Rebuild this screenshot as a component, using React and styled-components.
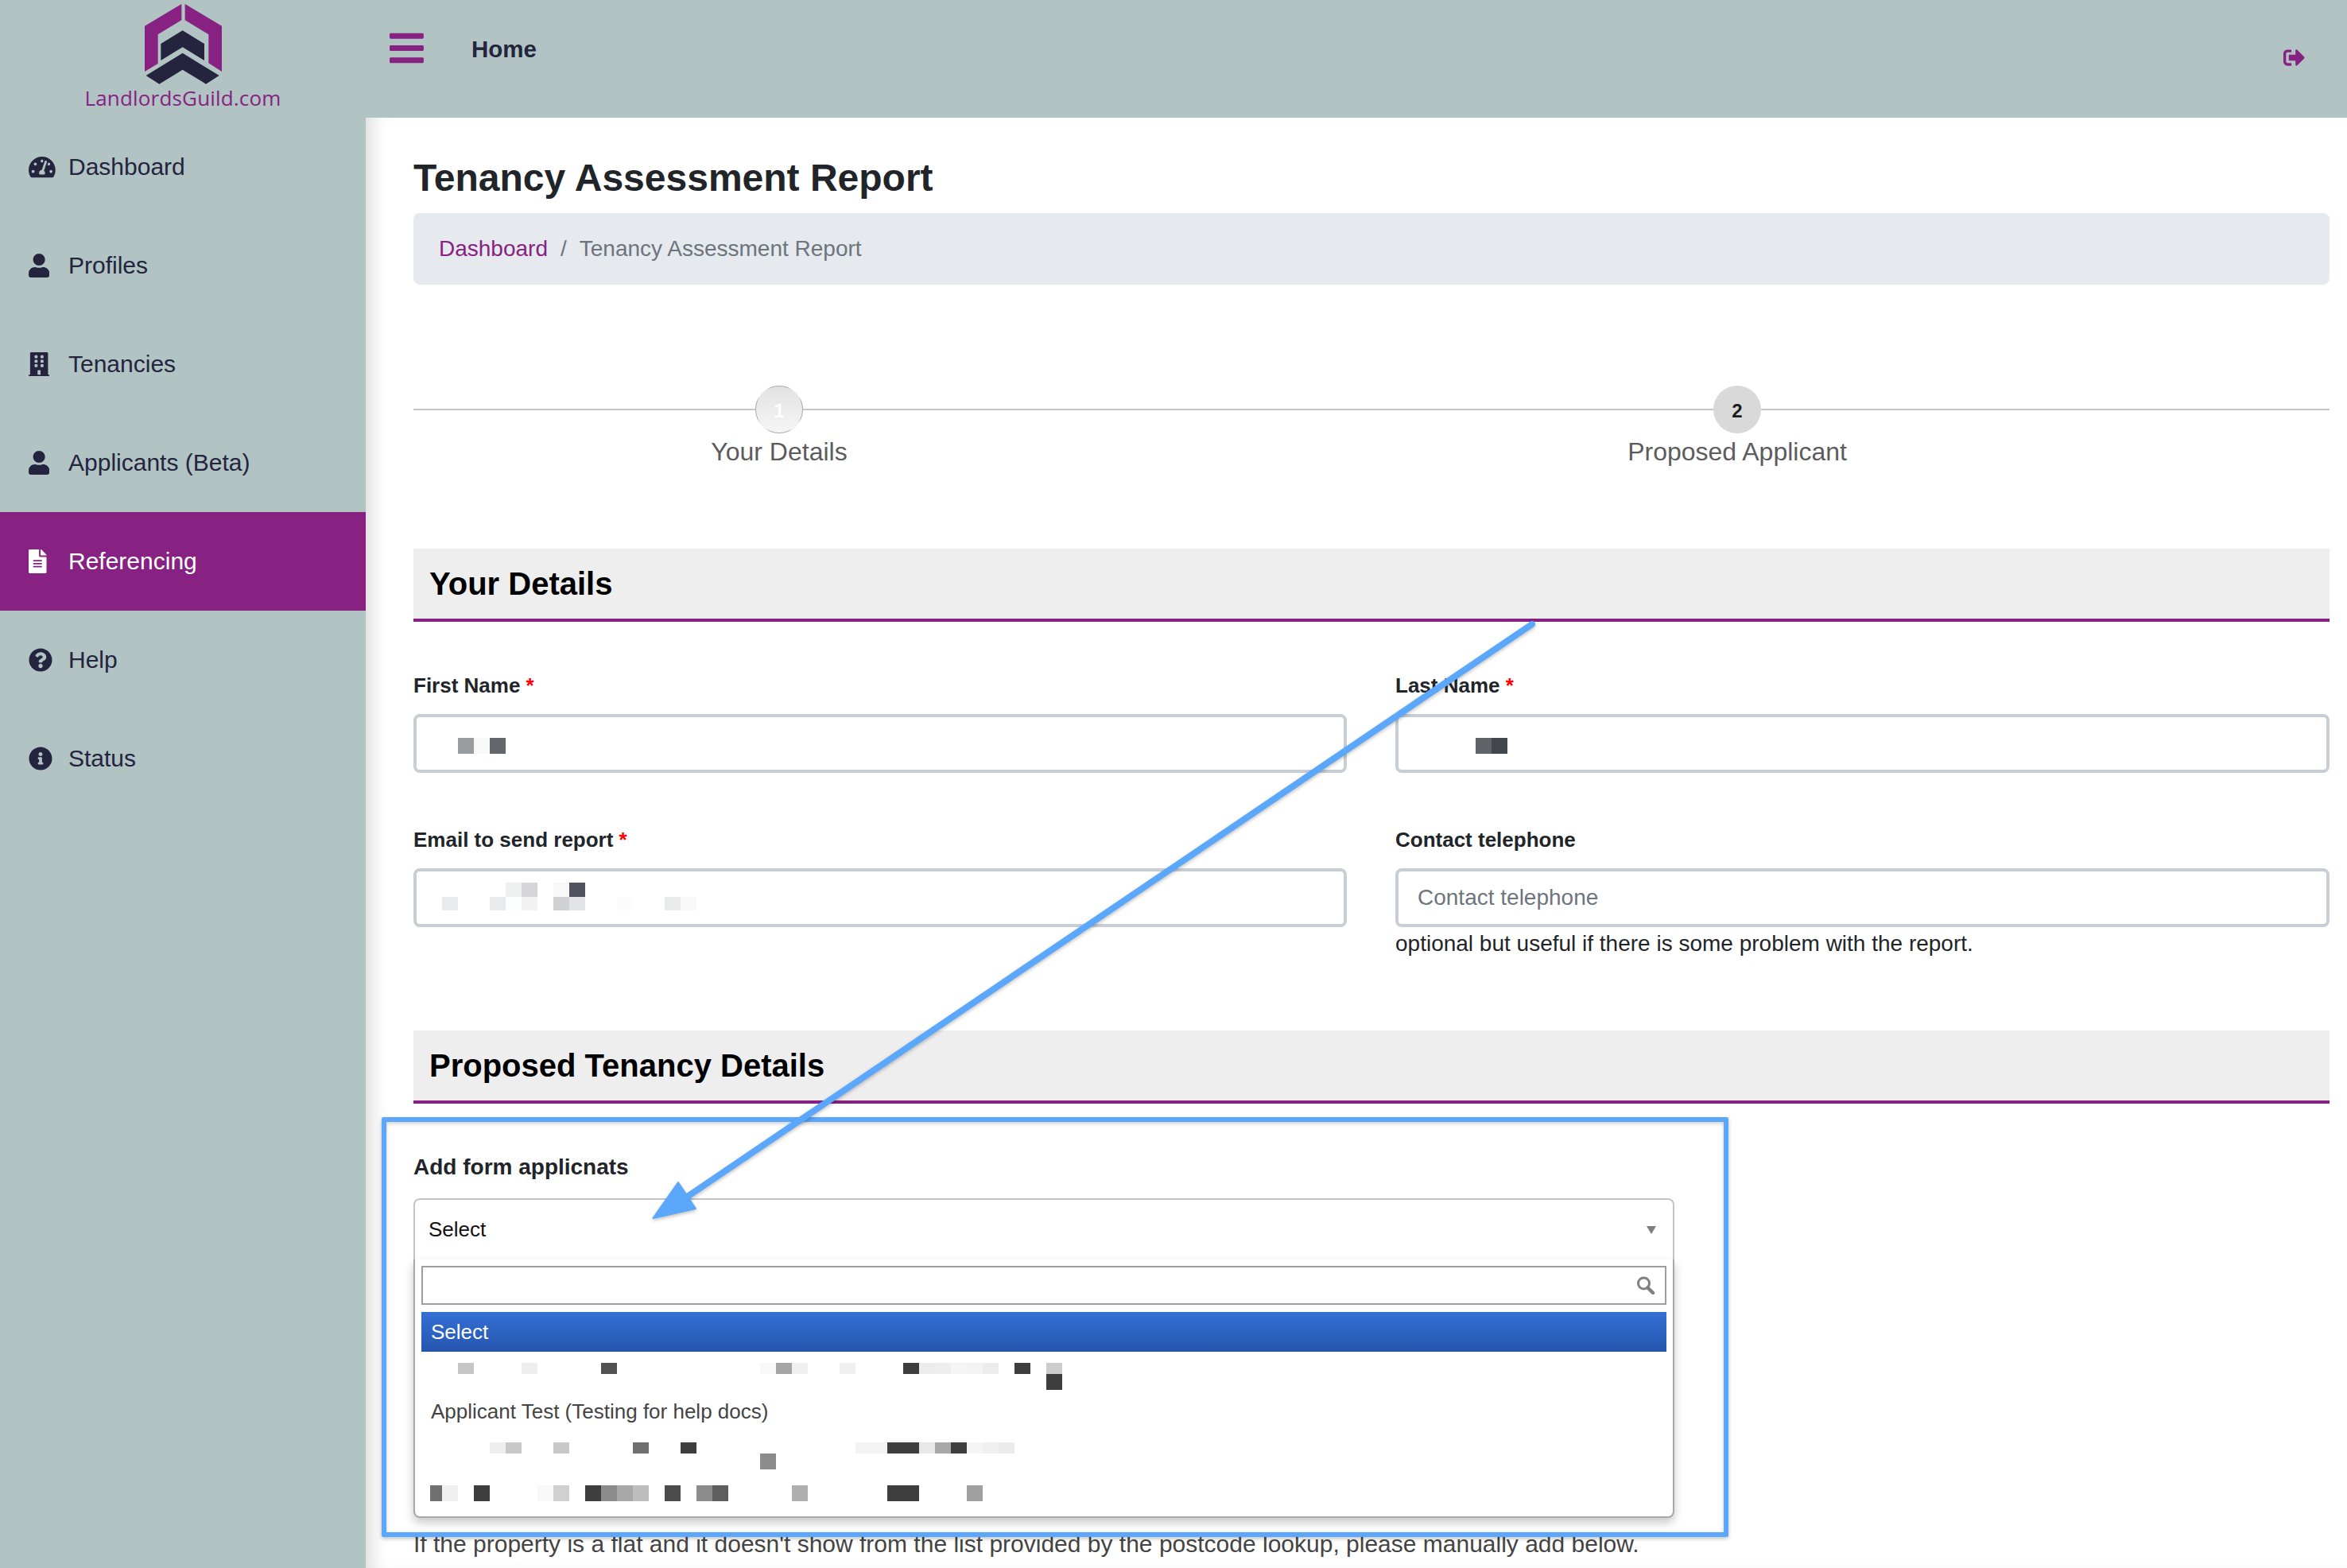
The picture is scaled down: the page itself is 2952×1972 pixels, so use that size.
import styled, { createGlobalStyle } from 'styled-components'
import {
  FaBars,
  FaBuilding,
  FaFileAlt,
  FaInfoCircle,
  FaQuestionCircle,
  FaSignOutAlt,
  FaTachometerAlt,
  FaUser,
} from 'react-icons/fa'

const purple = '#872282'
const navy = '#24243f'
const sage = '#b1c3c3'
const blue = '#5aa7fb'

const GlobalStyle = createGlobalStyle`
  html, body {
    margin: 0;
    padding: 0;
    background: #fff;
  }
  body {
    font-family: 'Liberation Sans', Arial, sans-serif;
    font-size: 28px;
    color: #212529;
  }
  * {
    box-sizing: border-box;
  }
`

const Page = styled.div`
  position: relative;
  width: 2952px;
  height: 1972px;
  overflow: hidden;
  display: grid;
  grid-template-columns: 460px 1fr;
`

const Sidebar = styled.aside`
  background: ${sage};
  display: flex;
  flex-direction: column;
`

const Brand = styled.div`
  height: 148px;
  padding-top: 5px;
  display: flex;
  flex-direction: column;
  align-items: center;
`

const BrandName = styled.div`
  font-family: 'Open Sans', sans-serif;
  font-size: 26px;
  line-height: 30px;
  margin-top: 2px;
  letter-spacing: 0.18px;
  color: ${purple};
`

const NavList = styled.nav`
  display: flex;
  flex-direction: column;
`

const NavItem = styled.a`
  height: 124px;
  padding-left: 36px;
  display: flex;
  align-items: center;
  font-size: 30px;
  color: ${(p) => (p.$active ? '#fff' : navy)};
  background: ${(p) => (p.$active ? purple : 'transparent')};
`

const NavIcon = styled.span`
  width: 50px;
  display: flex;
  font-size: 30px;
  svg {
    width: ${(p) => p.$ratio}em;
    flex-shrink: 0;
  }
`

const Content = styled.div`
  display: flex;
  flex-direction: column;
  min-width: 0;
`

const Topbar = styled.header`
  height: 148px;
  flex-shrink: 0;
  background: ${sage};
  padding: 0 53px 27px 30px;
  display: flex;
  align-items: center;
`

const MenuButton = styled.span`
  display: flex;
  color: ${purple};
  font-size: 49px;
  svg {
    width: 0.875em;
  }
`

const TopTitle = styled.div`
  margin-left: 60px;
  font-size: 29.5px;
  font-weight: bold;
  color: ${navy};
  margin-top: 3px;
`

const LogoutButton = styled.span`
  margin-left: auto;
  margin-top: 24px;
  display: flex;
  color: ${purple};
  font-size: 27px;
`

const Main = styled.main`
  flex: 1;
  background: #fff;
  padding: 47px 22px 0 60px;
  box-shadow: inset 22px 0 22px -14px rgba(0, 0, 0, 0.14);
`

const PageTitle = styled.h1`
  margin: 0 0 15px;
  font-size: 48px;
  line-height: 58px;
  font-weight: bold;
  color: #212529;
`

const Breadcrumb = styled.div`
  height: 90px;
  padding: 0 32px;
  background: #e6e9ed;
  border-radius: 8px;
  display: flex;
  align-items: center;
  color: #6c757d;
`

const Crumb = styled.a`
  color: ${purple};
`

const CrumbDivider = styled.span`
  margin: 0 16px;
`

const Stepper = styled.div`
  margin-top: 127px;
  display: grid;
  grid-template-columns: 920px 1fr;
`

const Step = styled.div`
  display: flex;
  flex-direction: column;
  align-items: center;
`

const StepTrack = styled.div`
  width: 100%;
  display: flex;
  align-items: center;
  &::before,
  &::after {
    content: '';
    flex: 1;
    height: 2px;
    background: #c6c6c6;
  }
`

const StepCircle = styled.div`
  width: 60px;
  height: 60px;
  border-radius: 50%;
  display: flex;
  align-items: center;
  justify-content: center;
  font-size: 24px;
  font-weight: bold;
  padding-top: 3px;
  ${(p) =>
    p.$done
      ? `
    color: #fff;
    border: 1.5px solid transparent;
    background:
      linear-gradient(#e2e2e2, #f6f6f6) padding-box,
      conic-gradient(#aaa 0 20deg, #eee 34deg 56deg, #aaa 70deg 110deg, #eee 124deg 146deg, #aaa 160deg 200deg, #eee 214deg 236deg, #aaa 250deg 290deg, #eee 304deg 326deg, #aaa 340deg) border-box;
  `
      : `
    color: #1c1c1c;
    background: #d9d9d9;
  `}
`

const StepLabel = styled.div`
  font-size: 32px;
  line-height: 38px;
  margin-top: 4px;
  color: #5c5c5c;
`

const SectionHeader = styled.h2`
  margin: ${(p) => p.$top}px 0 0;
  height: 92px;
  padding-left: 20px;
  display: flex;
  align-items: center;
  background: #eee;
  border-bottom: 4px solid ${purple};
  font-size: 40px;
  font-weight: bold;
  color: #000;
`

const FormGrid = styled.div`
  margin-top: 61px;
  display: grid;
  grid-template-columns: 1174px 1175px;
  column-gap: 61px;
  row-gap: 65px;
`

const Field = styled.div`
  display: flex;
  flex-direction: column;
`

const Label = styled.label`
  font-size: 26px;
  line-height: 39px;
  font-weight: bold;
  margin-bottom: 16px;
  color: #212529;
`

const Required = styled.span`
  color: #f00;
`

const InputBox = styled.div`
  height: 74px;
  border: 4px solid #c7ced6;
  border-radius: 8px;
  padding-left: ${(p) => p.$pad}px;
  padding-top: ${(p) => p.$top ?? 0}px;
  background: #fff;
  display: flex;
  align-items: flex-start;
`

const Placeholder = styled.span`
  color: #6c757d;
  line-height: 66px;
  font-size: 28px;
`

const Help = styled.div`
  font-size: 28px;
  line-height: 42px;
  color: #212529;
`

const SelectLabel = styled.div`
  margin-top: 59px;
  font-size: 28px;
  line-height: 42px;
  font-weight: bold;
  color: #212529;
`

const SelectBox = styled.div`
  margin-top: 18px;
  width: 1586px;
  height: 402px;
  display: flex;
  flex-direction: column;
`

const SelectTrigger = styled.div`
  height: 77px;
  flex-shrink: 0;
  padding: 0 21px 0 17px;
  border: 2px solid #c4c4c4;
  border-bottom: 0;
  border-radius: 8px 8px 0 0;
  display: flex;
  align-items: center;
  justify-content: space-between;
  font-size: 26px;
  color: #111;
`

const Caret = styled.span`
  width: 0;
  height: 0;
  border-left: 6px solid transparent;
  border-right: 6px solid transparent;
  border-top: 10px solid #7f7f7f;
`

const Dropdown = styled.div`
  flex: 1;
  padding: 8px 8px 0;
  border: 2px solid #a8a8a8;
  border-top: 0;
  border-radius: 0 0 8px 8px;
  box-shadow: 0 6px 12px rgba(0, 0, 0, 0.22);
  background: #fff;
  font-size: 26px;
`

const SearchBox = styled.div`
  height: 49px;
  padding-right: 12px;
  border: 2px solid #9e9e9e;
  display: flex;
  align-items: center;
  justify-content: flex-end;
  color: #808080;
`

const Option = styled.div`
  height: 50px;
  padding-left: ${(p) => p.$pad ?? 12}px;
  padding-top: ${(p) => p.$top ?? 0}px;
  display: flex;
  align-items: ${(p) => (p.$mosaic ? 'flex-start' : 'center')};
  color: #444;
`

const ActiveOption = styled(Option)`
  margin-top: 9px;
  background: linear-gradient(#3470d4, #2556ae);
  color: #fff;
`

const Mosaic = styled.div`
  display: grid;
  grid-template-columns: repeat(40, 20px);
  grid-template-rows: ${(p) => p.$rows};
  flex-shrink: 0;
`

const Pixel = styled.i`
  grid-column: ${(p) => p.$col};
  grid-row: ${(p) => p.$row};
  background: ${(p) => p.$bg};
  margin-left: ${(p) => p.$trim ?? 0}px;
`

const Note = styled.p`
  margin: 12px 0 0;
  font-size: 30px;
  line-height: 42px;
  color: #444;
`

const CalloutBox = styled.div`
  position: absolute;
  left: 480px;
  top: 1405px;
  width: 1694px;
  height: 528px;
  border: 6px solid ${blue};
  border-radius: 2px;
  box-shadow: 0 2px 5px rgba(0, 0, 0, 0.25), inset 0 2px 5px rgba(0, 0, 0, 0.2);
  pointer-events: none;
`

const CalloutArrow = styled.svg`
  position: absolute;
  left: 0;
  top: 0;
  filter: drop-shadow(0 2px 2px rgba(0, 0, 0, 0.25));
  pointer-events: none;
`

// ratio is the icon's viewBox width over its height, so it sits flush left
const navItems = [
  { label: 'Dashboard', icon: FaTachometerAlt, ratio: 1.125 },
  { label: 'Profiles', icon: FaUser, ratio: 0.875 },
  { label: 'Tenancies', icon: FaBuilding, ratio: 0.875 },
  { label: 'Applicants (Beta)', icon: FaUser, ratio: 0.875 },
  { label: 'Referencing', icon: FaFileAlt, ratio: 0.75, active: true },
  { label: 'Help', icon: FaQuestionCircle, ratio: 1 },
  { label: 'Status', icon: FaInfoCircle, ratio: 1 },
]

// redacted values in the screenshot: [column, row, colour]
const firstNamePixels = [[1, 1, '#9a9da0'], [2, 1, '#f8f8f8'], [3, 1, '#63666a']]
const lastNamePixels = [[1, 1, '#606367'], [2, 1, '#42474e']]
const emailPixels = [
  [2, 2, '#e9eaeb'], [5, 2, '#e9eaec'], [6, 1, '#eff0f0'], [6, 2, '#fcfdfd'],
  [7, 1, '#d6d6d8'], [7, 2, '#f2f2f2'], [9, 1, '#f8f8f8'], [9, 2, '#d0d1d3'],
  [10, 1, '#50535c'], [10, 2, '#e2e3e5'], [13, 2, '#fcfcfc'], [16, 2, '#e9eaea'], [17, 2, '#f8f8f8'],
]
const optionOne = [
  [3, 1, '#c6c6c6'], [7, 1, '#eeeeee'], [12, 1, '#525252'], [22, 1, '#f8f8f8'], [23, 1, '#a5a5a5'],
  [24, 1, '#efefef'], [27, 1, '#f0f0f0'], [31, 1, '#3e3e3e'], [32, 1, '#ececec'], [33, 1, '#eeeeee'],
  [34, 1, '#f5f5f5'], [35, 1, '#f3f3f3'], [36, 1, '#ececec'], [38, 1, '#3e3e3e'], [40, 1, '#cdcdcd'], [40, 2, '#3e3e3e'],
]
const optionThree = [
  [5, 1, '#eeeeee'], [6, 1, '#c8c8c8'], [9, 1, '#c8c8c8'], [14, 1, '#707070'], [17, 1, '#3e3e3e'],
  [22, 2, '#8c8c8c'], [28, 1, '#f3f3f3'], [29, 1, '#f3f3f3'], [30, 1, '#3e3e3e'], [31, 1, '#3e3e3e'],
  [32, 1, '#e8e8e8'], [33, 1, '#a8a8a8'], [34, 1, '#3e3e3e'], [35, 1, '#f5f5f5'], [36, 1, '#f0f0f0'], [37, 1, '#ebebeb'],
]
const optionFour = [
  [1, 1, '#707070', 5], [2, 1, '#f0f0f0'], [4, 1, '#3e3e3e'], [8, 1, '#f8f8f8'], [9, 1, '#d0d0d0'],
  [11, 1, '#3e3e3e'], [12, 1, '#8c8c8c'], [13, 1, '#a8a8a8'], [14, 1, '#bebebe'], [16, 1, '#4c4c4c'],
  [18, 1, '#8c8c8c'], [19, 1, '#5e5e5e'], [24, 1, '#b0b0b0'], [30, 1, '#3e3e3e'], [31, 1, '#3e3e3e'], [35, 1, '#a0a0a0'],
]

const Redacted = ({ pixels, rows }) => (
  <Mosaic $rows={rows}>
    {pixels.map(([col, row, bg, trim]) => (
      <Pixel key={`${col}-${row}`} $col={col} $row={row} $bg={bg} $trim={trim} />
    ))}
  </Mosaic>
)

const Logo = () => (
  <svg width="97" height="101" viewBox="367 15 291 303">
    <path fill={purple} d="M506 15 367 98v172l50-30V130l89-54zM519 15l139 83v172l-50-32V130l-89-54z" />
    <path fill={navy} d="M510 115l82 50v63l-82-50-82 50v-63zM510 200l138 85-50 32-88-54-88 54-50-32z" />
  </svg>
)

const SearchIcon = () => (
  <svg width="24" height="23" viewBox="0 0 24 23" fill="none" stroke="currentColor">
    <circle cx="9.5" cy="9" r="7" strokeWidth="3" />
    <path d="M14.5 14.5 21 21" strokeWidth="4.5" strokeLinecap="round" />
  </svg>
)

const App = () => (
  <Page>
    <GlobalStyle />
    <Sidebar>
      <Brand>
        <Logo />
        <BrandName>LandlordsGuild.com</BrandName>
      </Brand>
      <NavList>
        {navItems.map(({ label, icon: Icon, ratio, active }) => (
          <NavItem key={label} $active={active}>
            <NavIcon $ratio={ratio}>
              <Icon />
            </NavIcon>
            {label}
          </NavItem>
        ))}
      </NavList>
    </Sidebar>

    <Content>
      <Topbar>
        <MenuButton>
          <FaBars />
        </MenuButton>
        <TopTitle>Home</TopTitle>
        <LogoutButton>
          <FaSignOutAlt />
        </LogoutButton>
      </Topbar>

      <Main>
        <PageTitle>Tenancy Assessment Report</PageTitle>
        <Breadcrumb>
          <Crumb>Dashboard</Crumb>
          <CrumbDivider>/</CrumbDivider>
          Tenancy Assessment Report
        </Breadcrumb>

        <Stepper>
          <Step>
            <StepTrack>
              <StepCircle $done>1</StepCircle>
            </StepTrack>
            <StepLabel>Your Details</StepLabel>
          </Step>
          <Step>
            <StepTrack>
              <StepCircle>2</StepCircle>
            </StepTrack>
            <StepLabel>Proposed Applicant</StepLabel>
          </Step>
        </Stepper>

        <SectionHeader $top={103}>Your Details</SectionHeader>
        <FormGrid>
          <Field>
            <Label>
              First Name <Required>*</Required>
            </Label>
            <InputBox $pad={52} $top={26}>
              <Redacted pixels={firstNamePixels} rows="20px" />
            </InputBox>
          </Field>
          <Field>
            <Label>
              Last Name <Required>*</Required>
            </Label>
            <InputBox $pad={97} $top={26}>
              <Redacted pixels={lastNamePixels} rows="20px" />
            </InputBox>
          </Field>
          <Field>
            <Label>
              Email to send report <Required>*</Required>
            </Label>
            <InputBox $pad={12} $top={14}>
              <Redacted pixels={emailPixels} rows="18px 17px" />
            </InputBox>
          </Field>
          <Field>
            <Label>Contact telephone</Label>
            <InputBox $pad={24}>
              <Placeholder>Contact telephone</Placeholder>
            </InputBox>
            <Help>optional but useful if there is some problem with the report.</Help>
          </Field>
        </FormGrid>

        <SectionHeader $top={88}>Proposed Tenancy Details</SectionHeader>
        <SelectLabel>Add form applicnats</SelectLabel>
        <SelectBox>
          <SelectTrigger>
            Select
            <Caret />
          </SelectTrigger>
          <Dropdown>
            <SearchBox>
              <SearchIcon />
            </SearchBox>
            <ActiveOption>Select</ActiveOption>
            <Option $mosaic $pad={6} $top={14}>
              <Redacted pixels={optionOne} rows="14px 20px" />
            </Option>
            <Option>Applicant Test (Testing for help docs)</Option>
            <Option $mosaic $pad={6} $top={14}>
              <Redacted pixels={optionThree} rows="14px 20px" />
            </Option>
            <Option $mosaic $pad={6} $top={18}>
              <Redacted pixels={optionFour} rows="20px" />
            </Option>
          </Dropdown>
        </SelectBox>
        <Note>If the property is a flat and it doesn't show from the list provided by the postcode lookup, please manually add below.</Note>
      </Main>
    </Content>

    <CalloutBox />
    <CalloutArrow width="2952" height="1972" viewBox="0 0 2952 1972">
      <path d="M1927 785 860 1508" stroke={blue} strokeWidth="8" strokeLinecap="round" fill="none" />
      <path d="M853 1487 821.5 1532 875 1520z" fill={blue} stroke={blue} strokeWidth="2" strokeLinejoin="round" />
    </CalloutArrow>
  </Page>
)

export default App
